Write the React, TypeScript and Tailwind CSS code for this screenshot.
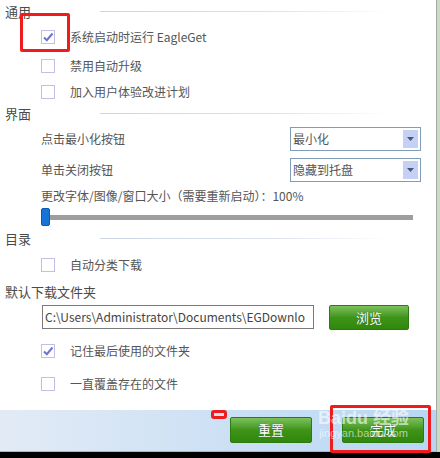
import React from 'react';

const font = { fontFamily: '"Noto Sans CJK SC", "Noto Sans", sans-serif' };

const Check: React.FC<{ checked?: boolean }> = ({ checked }) => (
  <div className="w-[14px] h-[14px] border border-[#c4bde8] bg-white flex items-center justify-center shrink-0">
    {checked && (
      <svg width="12" height="12" viewBox="0 0 12 12">
        <path d="M2 6.5 L4.8 9.2 L10.5 2.5" fill="none" stroke="#6b73d6" strokeWidth="2" />
      </svg>
    )}
  </div>
);

const Option: React.FC<{ label: string; checked?: boolean; h: string }> = ({ label, checked, h }) => (
  <div className={`flex items-center pl-[41px] ${h}`}>
    <Check checked={checked} />
    <span className="ml-[15px] text-[12px] text-[#555] leading-none">{label}</span>
  </div>
);

const Section: React.FC<{ title: string; h: string; line?: boolean }> = ({ title, h, line = true }) => (
  <div className={`flex items-center pl-[5px] ${h}`}>
    <span className="w-[95px] text-[13px] text-[#4a4a4a] leading-none">{title}</span>
    {line && <div className="h-[1px] w-[293px] bg-[linear-gradient(90deg,#cdd5e4_0%,#dde2ee_60%,#ffffff_100%)]" />}
  </div>
);

const Select: React.FC<{ value: string }> = ({ value }) => (
  <div className="w-[131px] h-[24px] border border-[#7f9db9] bg-white flex items-center justify-between pl-[2px] pr-[2px]">
    <span className="text-[12px] text-[#555] leading-none">{value}</span>
    <div className="w-[15px] h-[18px] bg-[#c5d0f7] flex items-center justify-center">
      <svg width="7" height="4" viewBox="0 0 7 4">
        <path d="M0 0 H7 L3.5 4 Z" fill="#4b5670" />
      </svg>
    </div>
  </div>
);

const GreenButton: React.FC<{ label: string; w: string; h: string }> = ({ label, w, h }) => (
  <div className={`${w} ${h} rounded-[2px] border border-[#2b7a14] bg-gradient-to-b from-[#7cc25a] via-[#3f9418] to-[#2f870b] flex items-center justify-center`}>
    <span className="text-[13px] text-white leading-none [text-shadow:0_0_1px_#1d5a08]">{label}</span>
  </div>
);

const App: React.FC = () => {
  return (
    <div className="w-[440px] h-[458px] flex flex-col bg-black overflow-hidden relative" style={font}>
      <div className="flex h-[452px]">
        <div className="w-[436px] flex flex-col bg-white">
          <div className="flex-1 flex flex-col">
            <Section title="通用" h="h-[22px]" />
            <Option label="系统启动时运行 EagleGet" checked h="h-[30px]" />
            <Option label="禁用自动升级" h="h-[27px]" />
            <Option label="加入用户体验改进计划" h="h-[26px]" />
            <Section title="界面" h="h-[17px]" />
            <div className="flex items-center justify-between pl-[41px] pr-[15px] h-[34px]">
              <span className="text-[12px] text-[#555] leading-none">点击最小化按钮</span>
              <Select value="最小化" />
            </div>
            <div className="flex items-center justify-between pl-[41px] pr-[15px] h-[28px]">
              <span className="text-[12px] text-[#555] leading-none">单击关闭按钮</span>
              <Select value="隐藏到托盘" />
            </div>
            <div className="flex items-center pl-[41px] h-[24px]">
              <span className="text-[12px] text-[#555] leading-none">更改字体/图像/窗口大小（需要重新启动）：100%</span>
            </div>
            <div className="flex items-center pl-[41px] h-[18px]">
              <div className="w-[372px] h-[5px] bg-[#9e9e9e] relative flex items-center">
                <div className="absolute left-0 w-[9px] h-[18px] rounded-[2px] bg-[#1674d6] border border-[#0c5bb0]" />
              </div>
            </div>
            <Section title="目录" h="h-[24px]" />
            <Option label="自动分类下载" h="h-[30px]" />
            <Section title="默认下载文件夹" h="h-[22px]" line={false} />
            <div className="flex items-center pl-[42px] h-[30px] gap-[15px]">
              <div className="w-[272px] h-[24px] border border-[#7a7a7a] bg-white flex items-center pl-[2px] overflow-hidden">
                <span className="text-[12px] text-[#444] leading-none whitespace-nowrap">C:\Users\Administrator\Documents\EGDownlo</span>
              </div>
              <GreenButton label="浏览" w="w-[80px]" h="h-[25px]" />
            </div>
            <Option label="记住最后使用的文件夹" checked h="h-[38px]" />
            <Option label="一直覆盖存在的文件" h="h-[28px]" />
          </div>
          <div className="h-[42px] flex items-center justify-end gap-[30px] pr-[12px] pb-[2px] bg-gradient-to-r from-[#e2ebf5] to-[#b8d6f4] border-b border-[#b4b4b4]">
            <GreenButton label="重置" w="w-[82px]" h="h-[26px]" />
            <GreenButton label="完成" w="w-[82px]" h="h-[26px]" />
          </div>
        </div>
        <div className="w-[4px] border-l border-[#a8a8a8] bg-[#c9ddc2]" />
      </div>

      <div className="absolute left-[20px] top-[13px] w-[50px] h-[39px] border-[3px] border-[#ee1c1c] rounded-[2px]" />
      <div className="absolute left-[211px] top-[410px] w-[16px] h-[9px] border-[3px] border-[#ee1c1c] rounded-[3px]" />
      <div className="absolute left-[330px] top-[405px] w-[101px] h-[48px] border-[3px] border-[#ee1c1c] rounded-[2px]" />

      <div className="absolute left-[318px] top-[409px] flex flex-col items-center text-white/60 leading-none pointer-events-none">
        <span className="text-[18px] font-bold whitespace-nowrap" style={{ fontFamily: '"Liberation Sans", "Noto Sans CJK SC", sans-serif' }}>Baidu 经验</span>
        <span className="text-[11px] mt-[1px]" style={{ fontFamily: '"Liberation Sans", sans-serif' }}>jingyan.baidu.com</span>
      </div>
    </div>
  );
};

export default App;
